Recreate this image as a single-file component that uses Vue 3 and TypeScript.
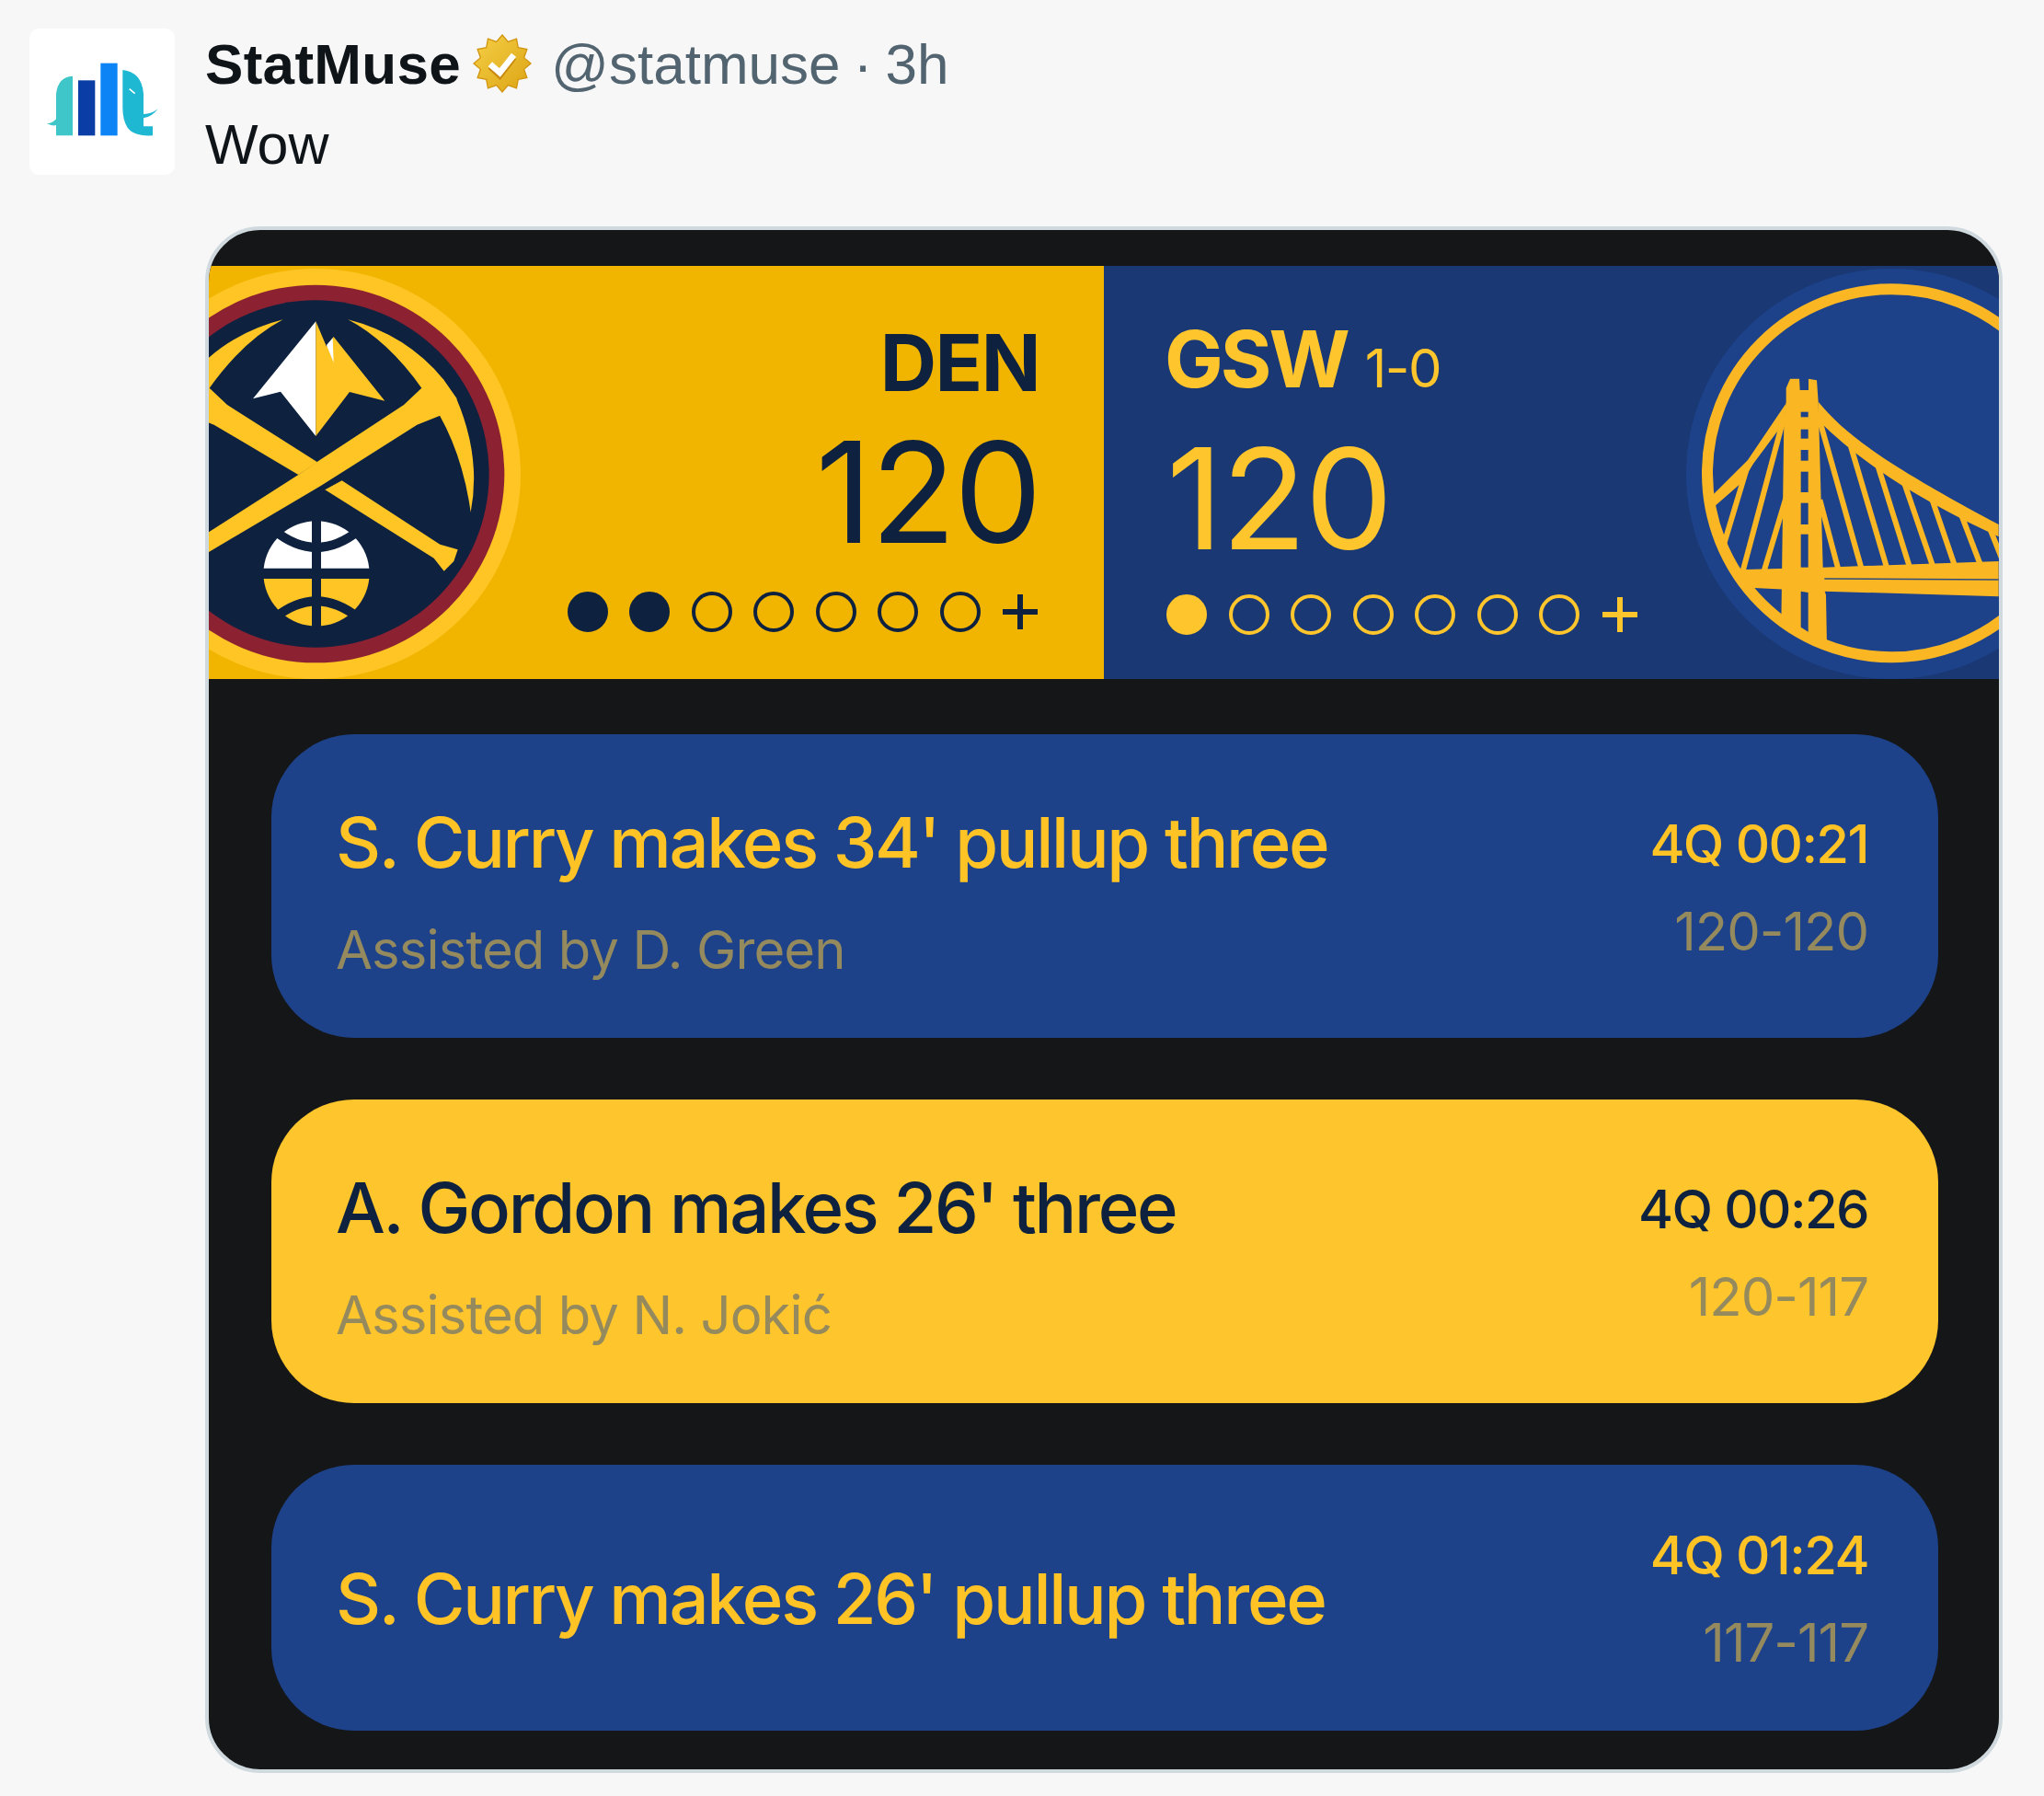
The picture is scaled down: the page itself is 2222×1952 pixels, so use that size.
<template>
  <div class="tweet">
    <div class="avatar">
      <svg viewBox="6 3 474 477" width="158" height="159">
        <path fill="#3fc6c9" d="M147 158Q100 160 93 215L93 298Q80 314 62 312Q80 322 93 318L93 352L147 352Z" />
        <rect x="165" y="172" width="55" height="180" fill="#0a3ea6" />
        <rect x="238" y="116" width="55" height="236" fill="#0d84f5" />
        <path fill="#1fb8d3" d="M310 138Q372 145 378 215L378 282Q405 282 425 265Q405 292 378 295L378 322L408 322L408 352Q345 356 325 325Q310 300 310 262Z" />
        <path d="M332 200L350 215" stroke="#fff" stroke-width="5" />
      </svg>
    </div>
    <div class="main">
      <div class="meta">
        <span class="name">StatMuse</span>
        <svg class="badge" viewBox="40 20 200 200" width="66" height="66">
          <defs>
            <linearGradient id="gold" x1="0" y1="0" x2="1" y2="1">
              <stop offset="0" stop-color="#f6cf45" />
              <stop offset="1" stop-color="#dba414" />
            </linearGradient>
          </defs>
          <polygon :points="starPoints" fill="url(#gold)" stroke="#d2950f" stroke-width="4" />
          <path d="M100 130L132 160L178 100" fill="none" stroke="#c98a0e" stroke-width="20" />
          <path d="M100 122L132 150L178 92" fill="none" stroke="#fff" stroke-width="20" />
        </svg>
        <span class="handle">@statmuse · 3h</span>
      </div>
      <div class="text">Wow</div>

      <div class="card">
        <div class="board">
          <div class="team den">
            <svg class="logo" viewBox="36 57 1017 1347" width="339" height="449">
              <circle cx="384" cy="735" r="669" fill="#fec524" />
              <circle cx="384" cy="735" r="616" fill="#8b2131" />
              <circle cx="384" cy="735" r="566" fill="#0e2240" />
              <polygon fill="#fff" points="385,238 180,490 270,467 385,612" />
              <polygon fill="#fec524" points="385,238 420,320 443,288 610,497 495,468 385,612" />
              <polygon fill="#fff" points="420,315 440,292 443,372" />
              <g fill="#fec524">
                <polygon points="672,510 730,455 800,425 845,490 790,545 715,575 400,775 36,990 36,925 328,738 390,695" />
                <path d="M732 458Q620 300 490 232Q680 280 802 428Z" />
                <path d="M788 543Q865 680 890 860Q925 680 843 488Z" />
                <polygon points="96,510 38,455 -32,425 -77,490 -22,545 53,575 328,738 390,697" />
                <path d="M36 458Q148 300 278 232Q88 280 -34 428Z" />
                <polygon points="415,787 470,757 790,965 848,982 835,1020 803,1052 770,1010" />
              </g>
              <path fill="#fff" d="M215 1043A173 173 0 0 1 559 1043Z" />
              <path fill="#fec524" d="M215 1077A173 173 0 0 0 559 1077Z" />
              <g fill="none" stroke="#0e2240" stroke-width="30">
                <path d="M250 920Q387 1030 525 920" />
                <path d="M250 1205Q387 1095 525 1205" />
                <path d="M387 870L387 1250" />
              </g>
            </svg>
            <div class="side">
              <div class="abbr">DEN</div>
              <div class="score">120</div>
              <div class="fouls">
                <i v-for="n in 7" :key="n" class="dot" :class="{ on: n <= 2 }"></i>
                <span class="plus"></span>
              </div>
            </div>
          </div>
          <div class="team gsw">
            <div class="side">
              <div class="abbr">GSW <small>1-0</small></div>
              <div class="score">120</div>
              <div class="fouls">
                <i v-for="n in 7" :key="n" class="dot" :class="{ on: n <= 1 }"></i>
                <span class="plus"></span>
              </div>
            </div>
            <svg class="logo" viewBox="100 57 1018 1347" width="340" height="449">
              <defs>
                <clipPath id="ring"><circle cx="768" cy="734" r="610" /></clipPath>
              </defs>
              <circle cx="768" cy="735" r="669" fill="#1d428a" />
              <circle cx="768" cy="733" r="600" fill="none" stroke="#fbb723" stroke-width="36" />
              <g clip-path="url(#ring)" fill="#fbb723">
                <polygon points="425,455 438,425 468,425 470,462 498,462 498,425 525,430 530,500 545,1040 545,1100 555,1130 558,1300 408,1300 418,560 425,500" />
                <path d="M425 505L300 690L185 805L190 842L282 762L318 702L420 565Z" />
                <path d="M530 500C620 610 760 710 1118 900L1118 940C880 830 680 710 530 560Z" />
                <polygon points="262,1048 545,1040 1118,1020 1118,1135 550,1118 320,1107" />
              </g>
              <g clip-path="url(#ring)" stroke="#fbb723" stroke-width="18">
                <path d="M535 820L596 1050" />
                <path d="M530 545L671 1045" />
                <path d="M630 625L753 1040" />
                <path d="M720 695L828 1040" />
                <path d="M807 755L903 1035" />
                <path d="M900 815L975 1035" />
                <path d="M995 865L1058 1030" />
                <path d="M1090 915L1130 1015" />
                <path d="M418 550L283 1055" />
                <path d="M424 815L352 1055" />
                <path d="M296 720L222 965" />
              </g>
              <g fill="#1d428a">
                <rect x="473" y="533" width="24" height="17" />
                <rect x="473" y="590" width="24" height="30" />
                <rect x="473" y="657" width="24" height="35" />
                <rect x="473" y="728" width="24" height="67" />
                <rect x="473" y="830" width="24" height="70" />
                <rect x="473" y="932" width="24" height="108" />
                <polygon points="473,1118 497,1122 497,1250 473,1235" />
              </g>
              <path d="M550 1077L1118 1080" stroke="#2f4b7c" stroke-width="5" />
            </svg>
          </div>
        </div>

        <div class="plays">
          <div v-for="play in plays" :key="play.clock" class="play" :class="[play.side, { tall: play.assist }]">
            <div class="play-main">
              <div class="play-title">{{ play.title }}</div>
              <div v-if="play.assist" class="play-sub">{{ play.assist }}</div>
            </div>
            <div class="play-side">
              <div class="clock">{{ play.clock }}</div>
              <div class="running">{{ play.running }}</div>
            </div>
          </div>
        </div>
      </div>
    </div>
  </div>
</template>

<script setup lang="ts">
const plays = [
  { side: 'blue', title: "S. Curry makes 34' pullup three", assist: 'Assisted by D. Green', clock: '4Q 00:21', running: '120-120' },
  { side: 'gold', title: "A. Gordon makes 26' three", assist: 'Assisted by N. Jokić', clock: '4Q 00:26', running: '120-117' },
  { side: 'blue', title: "S. Curry makes 26' pullup three", assist: '', clock: '4Q 01:24', running: '117-117' },
]

// 12-point seal around the middle of the badge
const starPoints = Array.from({ length: 24 }, (_, i) => {
  const r = i % 2 === 0 ? 94 : 74
  const a = (i * Math.PI) / 12 - Math.PI / 2
  return `${(140 + r * Math.cos(a)).toFixed(1)},${(120 + r * Math.sin(a)).toFixed(1)}`
}).join(' ')
</script>

<style scoped>
.tweet {
  display: flex;
  align-items: flex-start;
  gap: 33px;
  padding: 31px 45px 25px 32px;
  font-family: "Liberation Sans", Arial, sans-serif;
}

.avatar {
  width: 158px;
  height: 159px;
  flex: none;
  background: #fff;
  border-radius: 10px;
  overflow: hidden;
}

.avatar svg,
.logo {
  display: block;
  flex: none;
}

.main {
  width: 1954px;
}

.meta {
  display: flex;
  align-items: center;
  height: 70px;
  margin-top: 3px;
  white-space: nowrap;
}

.name {
  font-size: 62px;
  font-weight: 700;
  letter-spacing: 0.3px;
  color: #0f1419;
}

.badge {
  margin-left: 12px;
  margin-right: 20px;
}

.handle {
  font-size: 62px;
  word-spacing: -3px;
  color: #536471;
}

.text {
  margin-top: 19px;
  font-size: 61px;
  line-height: 69px;
  color: #0f1419;
}

.card {
  margin-top: 54px;
  padding-top: 39px;
  border: 4px solid #cfd9de;
  border-radius: 60px;
  background: #151618;
  overflow: hidden;
  font-family: Inter, "Noto Sans", sans-serif;
}

.board {
  display: flex;
  height: 449px;
}

.team {
  display: flex;
}

.den {
  width: 973px;
  background: #f1b500;
  color: #0e2240;
}

.gsw {
  flex: 1;
  background: #1a3873;
  color: #fec52c;
  justify-content: space-between;
}

.side {
  display: flex;
  flex-direction: column;
  flex: 1;
}

.den .side {
  align-items: flex-end;
  padding: 56px 72px 0 0;
}

.gsw .side {
  align-items: flex-start;
  padding: 52px 0 0 68px;
}

.abbr {
  margin-right: -2px;
  font-size: 85px;
  font-weight: 700;
  line-height: 100px;
  letter-spacing: -1.5px;
  white-space: nowrap;
}

.gsw .abbr {
  margin-right: 0;
  margin-left: -2px;
  letter-spacing: -3px;
}

.abbr small {
  margin-left: 2px;
  font-size: 58px;
  font-weight: 400;
  letter-spacing: -1.5px;
}

.score {
  margin-top: 8px;
  font-size: 152px;
  font-weight: 400;
  line-height: 165px;
  letter-spacing: -2px;
}

.den .score {
  margin-right: -3px;
}

.gsw .score {
  margin-top: 10px;
}

.fouls {
  display: flex;
  align-items: center;
  gap: 23.5px;
  margin-top: 25px;
}

.gsw .fouls {
  margin-top: 21px;
}

.dot {
  width: 44px;
  height: 44px;
  box-sizing: border-box;
  border: 4px solid currentColor;
  border-radius: 50%;
}

.dot.on {
  background: currentColor;
}

.plus {
  width: 38px;
  height: 38px;
  margin-left: 1px;
  background:
    linear-gradient(currentColor, currentColor) center / 100% 6px no-repeat,
    linear-gradient(currentColor, currentColor) center / 6px 100% no-repeat;
}

.plays {
  display: flex;
  flex-direction: column;
  gap: 67px;
  padding: 60px 66px 42px 68px;
}

.play {
  display: flex;
  justify-content: space-between;
  align-items: center;
  height: 289px;
  padding: 0 76px 0 70px;
  border-radius: 90px;
}

.play.tall {
  height: 330px;
}

.play.blue {
  background: #1d428a;
  color: #ffc325;
}

.play.gold {
  background: #fec52c;
  color: #0e2240;
}

.play-main {
  white-space: nowrap;
}

.tall .play-main {
  margin-top: 16px;
}

.play-title {
  font-size: 76px;
  font-weight: 500;
  line-height: 90px;
  letter-spacing: -2.3px;
}

.play-sub {
  margin-top: 32px;
  font-size: 58px;
  line-height: 80px;
  letter-spacing: -0.9px;
  color: #948a5e;
}

.play-side {
  margin-top: 3px;
  text-align: right;
  white-space: nowrap;
  font-size: 58px;
  line-height: 95px;
  letter-spacing: -1px;
}

.clock {
  font-weight: 500;
  letter-spacing: -1.6px;
}

.running {
  color: #948a5e;
}
</style>

<style>
html,
body {
  background: #f7f7f7;
}
</style>
